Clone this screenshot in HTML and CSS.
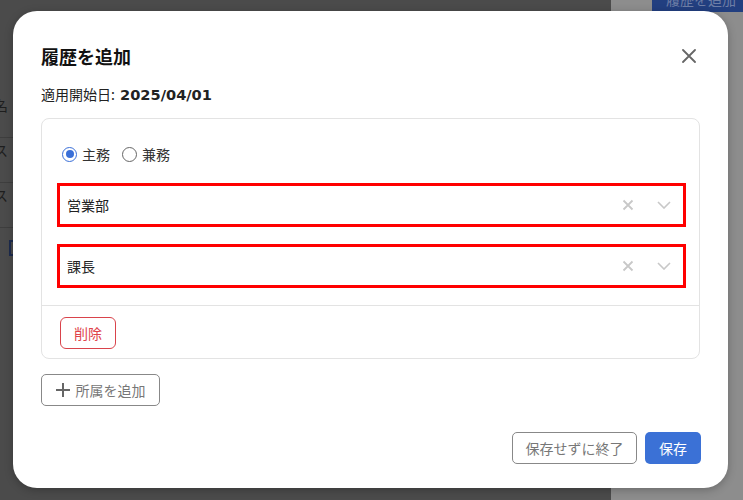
FILE: index.html
```html
<!DOCTYPE html>
<html lang="ja">
<head>
    <meta charset="UTF-8">
    <meta name="viewport" content="width=device-width, initial-scale=1.0">
    <title>履歴を追加</title>
    <link rel="stylesheet" href="styles.css">
</head>
<body>
    <div class="page">
        <div class="main">
            <div class="row">名</div>
            <div class="row">ス</div>
            <div class="row">ス</div>
            <div class="row"><span class="mark"></span></div>
        </div>
        <div class="side">
            <div class="side-button">履歴を追加</div>
        </div>
    </div>

    <div class="modal">
        <div class="modal-header">
            <h2 class="modal-title">履歴を追加</h2>
            <button class="close-button" aria-label="閉じる">
                <svg width="14" height="14" viewBox="0 0 14 14"><path d="M1 1L13 13M13 1L1 13" stroke="#666" stroke-width="1.8" stroke-linecap="round"/></svg>
            </button>
        </div>
        <p class="start-date">適用開始日: <b>2025/04/01</b></p>

        <div class="card">
            <div class="card-body">
                <div class="radios">
                    <label class="radio"><span class="dot checked"></span>主務</label>
                    <label class="radio"><span class="dot"></span>兼務</label>
                </div>
                <div class="select">
                    <span class="select-value">営業部</span>
                    <span class="select-icons">
                        <svg width="12" height="12" viewBox="0 0 12 12"><path d="M1.5 1.5L10.5 10.5M10.5 1.5L1.5 10.5" stroke="#c8c8c8" stroke-width="1.8"/></svg>
                        <svg width="14" height="8" viewBox="0 0 14 8"><path d="M1 1L7 7L13 1" fill="none" stroke="#c8c8c8" stroke-width="1.6"/></svg>
                    </span>
                </div>
                <div class="select">
                    <span class="select-value">課長</span>
                    <span class="select-icons">
                        <svg width="12" height="12" viewBox="0 0 12 12"><path d="M1.5 1.5L10.5 10.5M10.5 1.5L1.5 10.5" stroke="#c8c8c8" stroke-width="1.8"/></svg>
                        <svg width="14" height="8" viewBox="0 0 14 8"><path d="M1 1L7 7L13 1" fill="none" stroke="#c8c8c8" stroke-width="1.6"/></svg>
                    </span>
                </div>
            </div>
            <div class="card-footer">
                <button class="delete-button">削除</button>
            </div>
        </div>

        <button class="add-button">
            <svg width="14" height="14" viewBox="0 0 14 14"><path d="M7 0V14M0 7H14" stroke="#666" stroke-width="2"/></svg>
            所属を追加
        </button>

        <div class="modal-footer">
            <button class="cancel-button">保存せずに終了</button>
            <button class="save-button">保存</button>
        </div>
    </div>
</body>
</html>
```

FILE: styles.css
```css
body {
    margin: 0;
    font-family: "Noto Sans CJK JP", "DejaVu Sans", sans-serif;
    color: #222;
    overflow: hidden;
}
.page {
    display: flex;
    height: 500px;
}
.main {
    width: 611px;
    background: #4b4b4b;
    padding-top: 93px;
    box-sizing: border-box;
}
.row {
    height: 44px;
    border-bottom: 1px solid #3e3e3e;
    color: #1e1e1e;
    font-size: 14px;
    line-height: 24px;
    margin-left: -6px;
}
.row:last-child {
    border-bottom: none;
    padding-top: 10px;
    padding-left: 15px;
}
.mark {
    display: inline-block;
    width: 4px;
    height: 12px;
    border: 2px solid #1c2b4e;
    border-right: none;
}
.side {
    flex: 1;
    background: #8d8d8d;
    position: relative;
}
.side-button {
    position: absolute;
    left: 41px;
    right: 0;
    top: -11px;
    height: 23px;
    background: #223f80;
    color: #6e7ea6;
    font-size: 14px;
    line-height: 20px;
    padding-left: 14px;
}

.modal {
    position: absolute;
    left: 13px;
    top: 11px;
    width: 715px;
    height: 477px;
    box-sizing: border-box;
    background: #fff;
    border-radius: 24px;
    padding: 32px 28px 24px;
    display: flex;
    flex-direction: column;
    box-shadow: 0 2px 8px rgba(0, 0, 0, 0.25);
}
.modal-header {
    display: flex;
    justify-content: space-between;
    align-items: center;
    height: 26px;
}
.modal-title {
    margin: 0;
    font-size: 18px;
    font-weight: bold;
    color: #111;
}
.close-button {
    width: 24px;
    height: 24px;
    border: none;
    background: none;
    padding: 0;
    margin-right: -1px;
    display: flex;
    align-items: center;
    justify-content: center;
    cursor: pointer;
}
.start-date {
    margin: 14px 0 0;
    font-size: 14px;
    line-height: 22px;
    color: #222;
}
.start-date b {
    font-family: "DejaVu Sans", sans-serif;
    font-size: 14.6px;
    margin-left: 2px;
}
.card {
    margin-top: 12px;
    border: 1px solid #e3e3e3;
    border-radius: 8px;
}
.card-body {
    padding: 23px 13px 17px 15px;
    border-bottom: 1px solid #e3e3e3;
}
.radios {
    display: flex;
    gap: 12px;
    padding-left: 5px;
    height: 24px;
    margin-bottom: 1px;
    align-items: center;
}
.radio {
    display: flex;
    align-items: center;
    gap: 5px;
    font-size: 14px;
    color: #333;
}
.dot {
    width: 13px;
    height: 13px;
    border: 1.5px solid #666;
    border-radius: 50%;
    box-sizing: content-box;
    position: relative;
}
.dot.checked {
    border-color: #3a6fd8;
}
.dot.checked::after {
    content: "";
    position: absolute;
    left: 2.5px;
    top: 2.5px;
    width: 8px;
    height: 8px;
    border-radius: 50%;
    background: #3a6fd8;
}
.select {
    margin-top: 17px;
    height: 44px;
    box-sizing: border-box;
    border: 3px solid #ff0000;
    display: flex;
    align-items: center;
    justify-content: space-between;
    padding: 0 12px 0 7px;
}
.select-value {
    font-size: 14px;
    color: #222;
}
.select-icons {
    display: flex;
    align-items: center;
    gap: 23px;
}
.card-footer {
    padding: 11px 18px 9px;
}
.delete-button {
    height: 32px;
    width: 56px;
    border: 1px solid #d9434b;
    border-radius: 6px;
    background: #fff;
    color: #e0434b;
    font-family: inherit;
    font-size: 14px;
    cursor: pointer;
}
.add-button {
    align-self: flex-start;
    margin-top: 15px;
    height: 32px;
    width: 119px;
    border: 1px solid #888;
    border-radius: 5px;
    background: #fff;
    color: #777;
    font-family: inherit;
    font-size: 14px;
    display: flex;
    align-items: center;
    justify-content: center;
    gap: 6px;
    cursor: pointer;
}
.modal-footer {
    margin-top: auto;
    display: flex;
    justify-content: flex-end;
    gap: 8px;
    margin-right: -1px;
}
.cancel-button, .save-button {
    height: 32px;
    border-radius: 5px;
    font-family: inherit;
    font-size: 14px;
    cursor: pointer;
}
.cancel-button {
    width: 125px;
    border: 1px solid #888;
    background: #fff;
    color: #777;
}
.save-button {
    width: 56px;
    border: none;
    background: #3b71d6;
    color: #fff;
}
```
